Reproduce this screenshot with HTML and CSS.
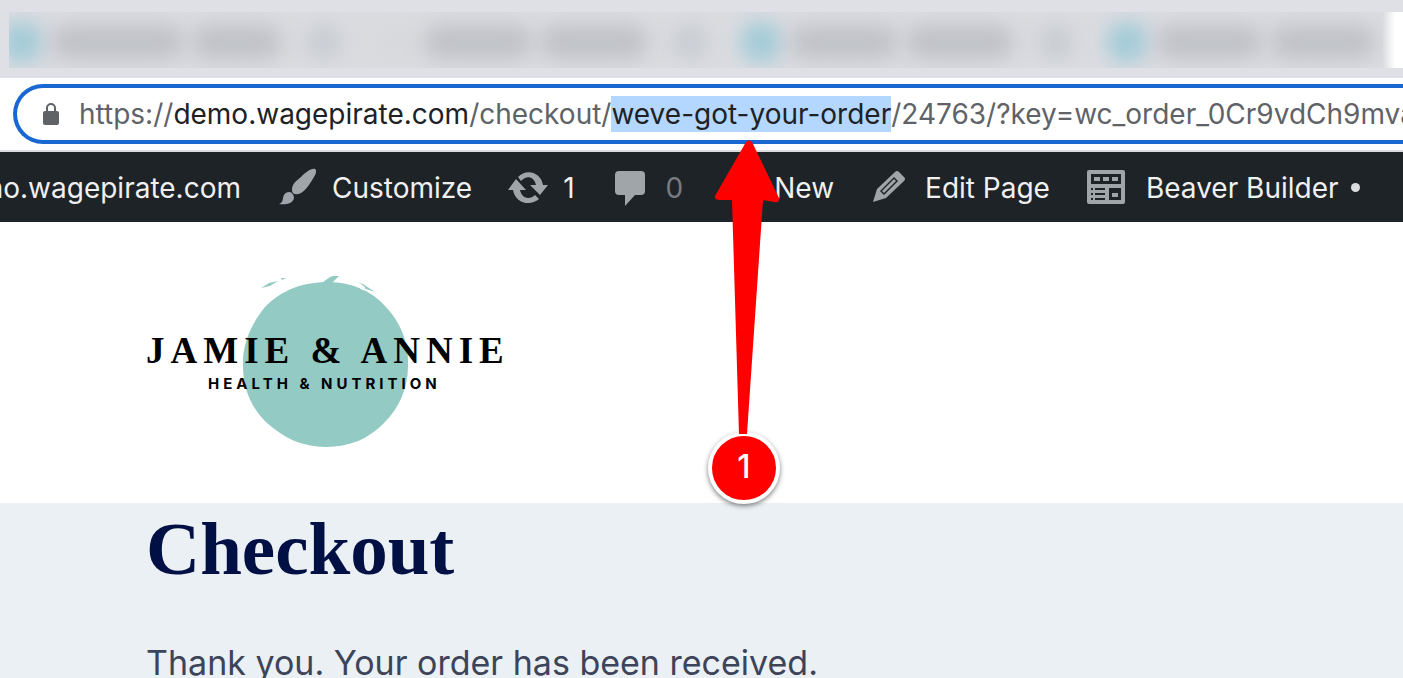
FILE: index.html
```html
<!DOCTYPE html>
<html lang="en">
<head>
  <meta charset="UTF-8">
  <meta name="viewport" content="width=device-width, initial-scale=1">
  <title>Checkout - Jamie &amp; Annie</title>
  <link rel="stylesheet" href="styles.css">
</head>
<body>
  <!-- Browser tabs, blurred out -->
  <div class="tab-strip" aria-hidden="true">
    <div class="tabs">
      <div class="tab first"><i class="favicon"></i><i class="title"></i><i class="title short"></i><i class="close-dot"></i></div>
      <div class="tab"><i class="favicon faint"></i><i class="title"></i><i class="title"></i><i class="close-dot"></i></div>
      <div class="tab"><i class="favicon"></i><i class="title"></i><i class="title"></i><i class="close-dot"></i></div>
      <div class="tab last"><i class="favicon"></i><i class="title"></i><i class="title"></i></div>
    </div>
    <div class="tab-active"></div>
  </div>

  <div class="toolbar">
    <div class="address-bar">
      <svg class="lock" viewBox="0 0 16 22">
        <path d="M4 9V5a4 4 0 0 1 8 0v4" fill="none" stroke="#5f6368" stroke-width="2"/>
        <rect y="8" width="16" height="14" rx="2" fill="#5f6368"/>
      </svg>
      <div class="url" role="textbox" aria-label="Address" contenteditable="true" spellcheck="false">https://<span class="domain">demo.wagepirate.com</span>/checkout/<mark>weve-got-your-order</mark>/24763/?key=wc_order_0Cr9vdCh9mva</div>
    </div>
  </div>

  <nav class="admin-bar">
    <a href="#" class="site-name"><span>demo.wagepirate.com</span></a>
    <a href="#" class="customize">
      <svg viewBox="0 0 40 40"><path d="M38 2c2 1 1 5-1 8-4 7-8 13-13 16-4 2-9 2-9-3 0-6 4-9 9-13 4-4 10-9 14-8zM12 25c3 0 5 3 5 6-1 6-9 7-15 6 5-2 3-5 5-9 1-2 3-3 5-3z"/></svg>
      <span>Customize</span>
    </a>
    <a href="#" class="updates">
      <svg viewBox="0 0 40 40"><path d="M10 10C18 1 33 5 35 18h5l-8 10-10-10h6C26 9 18 8 13 14zM0 23 8 12l10 11h-6c2 9 10 10 15 5l4 4C22 40 7 36 5 23z"/></svg>
      <span>1</span>
    </a>
    <a href="#" class="comments">
      <svg viewBox="0 0 40 40"><path d="M8 4h22a4 4 0 0 1 4 4v16a4 4 0 0 1-4 4h-6L14 39V28H8a4 4 0 0 1-4-4V8a4 4 0 0 1 4-4z"/></svg>
      <span>0</span>
    </a>
    <a href="#" class="new">
      <svg viewBox="0 0 40 40"><path d="M17 8h6v9h9v6h-9v9h-6v-9H8v-6h9z"/></svg>
      <span>New</span>
    </a>
    <a href="#" class="edit">
      <svg viewBox="0 0 40 40"><path fill-rule="evenodd" d="M25 5q2-2 4 0l5 5q2 2 0 4L16 31 3 35 7 22zM10 24l4 4 14-14-4-4z"/><path d="m12 24 12-12 2 2-12 12z"/></svg>
      <span>Edit Page</span>
    </a>
    <a href="#" class="builder">
      <svg viewBox="0 0 40 40">
        <rect x="1" y="3" width="38" height="34" rx="2"/>
        <path fill="#1d2327" d="M5 7h30v10H5zM5 21h2v2H5zM9 21h10v2H9zM5 26h2v2H5zM9 26h10v2H9zM5 31h2v2H5zM9 31h10v2H9zM23 21h12v12H23z"/>
        <path d="M8 10h6v4H8zM17 10h6v4h-6zM26 10h6v4h-6zM26 26h6v4h-6z"/>
      </svg>
      <span>Beaver Builder</span>
      <i class="status-dot"></i>
    </a>
  </nav>

  <header class="site-header">
    <a href="#" class="logo" aria-label="Jamie &amp; Annie Health &amp; Nutrition">
      <svg viewBox="0 0 364 174">
        <path fill="#93cac3" d="M180 6C205 5 226 14 241 31C256 47 264 67 263 90C263 112 254 132 240 146C224 163 204 171 181 171C157 171 139 162 122 147C106 132 98 112 98 90C97 67 107 47 120 31C137 14 156 7 180 6z"/>
        <path fill="#93cac3" d="M177 7q7-6 11-7h6l-8 8zM116 12l8-5 9-2-8 5zM136 2h5l-4 2zM208 5l10 3 12 8-12-4z"/>
        <path fill="none" stroke="#fff" stroke-width="4" stroke-linecap="round" d="M118 15q14-6 28-8M203 5q9 2 15 7"/>
        <text x="1" y="87" class="logo-name">JAMIE &amp; ANNIE</text>
        <text x="63" y="113" class="logo-sub">HEALTH &amp; NUTRITION</text>
      </svg>
    </a>
  </header>

  <main>
    <h1>Checkout</h1>
    <p>Thank you. Your order has been received.</p>
  </main>

  <!-- Step marker -->
  <div class="marker">
    <svg viewBox="0 0 72 294"><path fill="#f00" d="M38 2q3-3 6 0l27 56q1 5-5 4l-11-2-16 234h-8L24 60l-12 0q-6 0-5-4z"/></svg>
    <span>1</span>
  </div>
</body>
</html>
```
FILE: styles.css
```css
* {
  box-sizing: border-box;
}

body {
  margin: 0;
  height: 100vh;
  display: flex;
  flex-direction: column;
  overflow: hidden;
  position: relative;
  background: #fff;
  font-family: Inter, "Liberation Sans", sans-serif;
}

a {
  color: inherit;
  text-decoration: none;
}

/* tabs */
.tab-strip {
  flex: none;
  display: flex;
  height: 78px;
  padding: 12px 0 10px 9px;
  background: #dee0e5;
}

.tabs {
  flex: 1;
  display: flex;
  overflow: hidden;
  background: #dbdce0;
}

.tab {
  flex: 0 0 366px;
  display: flex;
  align-items: center;
  gap: 8px;
  padding: 4px 24px 0 8px;
}

.tab.first {
  flex-basis: 357px;
  padding-left: 0;
}

.tab.first .favicon {
  margin-left: -8px;
}

.tab.last {
  padding-right: 88px;
}

.tab i {
  filter: blur(10px);
}

.favicon {
  width: 42px;
  height: 42px;
  border-radius: 50%;
  background: #a2cbd8;
}

.favicon.faint {
  background: #d7d9dc;
}

.title {
  flex: 1;
  height: 34px;
  border-radius: 16px;
  background: #c0c2c7;
}

.title.short {
  flex: 0 0 90px;
}

.close-dot {
  width: 36px;
  height: 36px;
  margin-left: 16px;
  border-radius: 50%;
  background: #c8ccd1;
}

.tab-active {
  width: 20px;
  background: linear-gradient(to right, #dbdce0, #fff 12px);
}

/* address bar */
.toolbar {
  flex: none;
  padding: 6px 0 6px 13px;
  border-bottom: 2px solid #dadce0;
}

.address-bar {
  display: flex;
  align-items: center;
  height: 60px;
  padding-left: 26px;
  border: 4px solid #1967d2;
  border-right: 0;
  border-radius: 30px 0 0 30px;
  overflow: hidden;
}

.lock {
  flex: none;
  width: 16px;
  height: 22px;
  margin-right: 20px;
}

.url {
  flex: 1;
  white-space: nowrap;
  outline: none;
  font-size: 28px;
  line-height: 36px;
  color: #5f6368;
}

.domain {
  color: #202124;
}

.url mark {
  display: inline-block;
  background: #b3d7ff;
  color: #202124;
}

/* admin bar */
.admin-bar {
  flex: none;
  display: flex;
  align-items: center;
  gap: 36px;
  height: 70px;
  background: #1d2327;
  color: #f0f0f1;
  font-size: 28px;
  line-height: 36px;
  white-space: nowrap;
  overflow: hidden;
}

.admin-bar a {
  flex: none;
  display: flex;
  align-items: center;
  gap: 15px;
}

.admin-bar span {
  padding-top: 2px;
}

.admin-bar svg {
  width: 40px;
  height: 40px;
  fill: #a0a5aa;
}

.admin-bar .site-name {
  width: 241px;
  justify-content: flex-end;
}

.admin-bar .builder {
  gap: 20px;
}

.status-dot {
  width: 9px;
  height: 9px;
  margin-left: -8px;
  border-radius: 50%;
  background: #dcdcde;
}

.comments span {
  color: #787c82;
}

/* page */
.site-header {
  flex: none;
  padding: 54px 145px 53px;
}

.logo {
  display: block;
  width: 364px;
}

.logo svg {
  display: block;
  overflow: visible;
}

.logo-name {
  font: bold 37px "Liberation Serif", serif;
  letter-spacing: 6px;
}

.logo-sub {
  font: 700 15px Inter, sans-serif;
  letter-spacing: 4px;
}

main {
  flex: 1 0 auto;
  padding: 4px 146px;
  background: #eaf0f3;
}

h1 {
  margin: 0 0 48px;
  font: bold 75px/84px "Liberation Serif", serif;
  color: #000f44;
}

p {
  margin: 0;
  font-size: 34px;
  line-height: 48px;
  color: #3d4459;
}

/* arrow and number over the page */
.marker {
  position: absolute;
  top: 140px;
  left: 708px;
  width: 72px;
}

.marker svg {
  display: block;
}

.marker span {
  display: block;
  width: 72px;
  height: 72px;
  margin-top: -2px;
  border: 4px solid #fff;
  border-radius: 50%;
  background: #f00;
  box-shadow: 0 2px 5px rgba(0, 0, 0, 0.5);
  color: #fff;
  font-size: 32px;
  font-weight: 500;
  line-height: 62px;
  text-align: center;
}
```
